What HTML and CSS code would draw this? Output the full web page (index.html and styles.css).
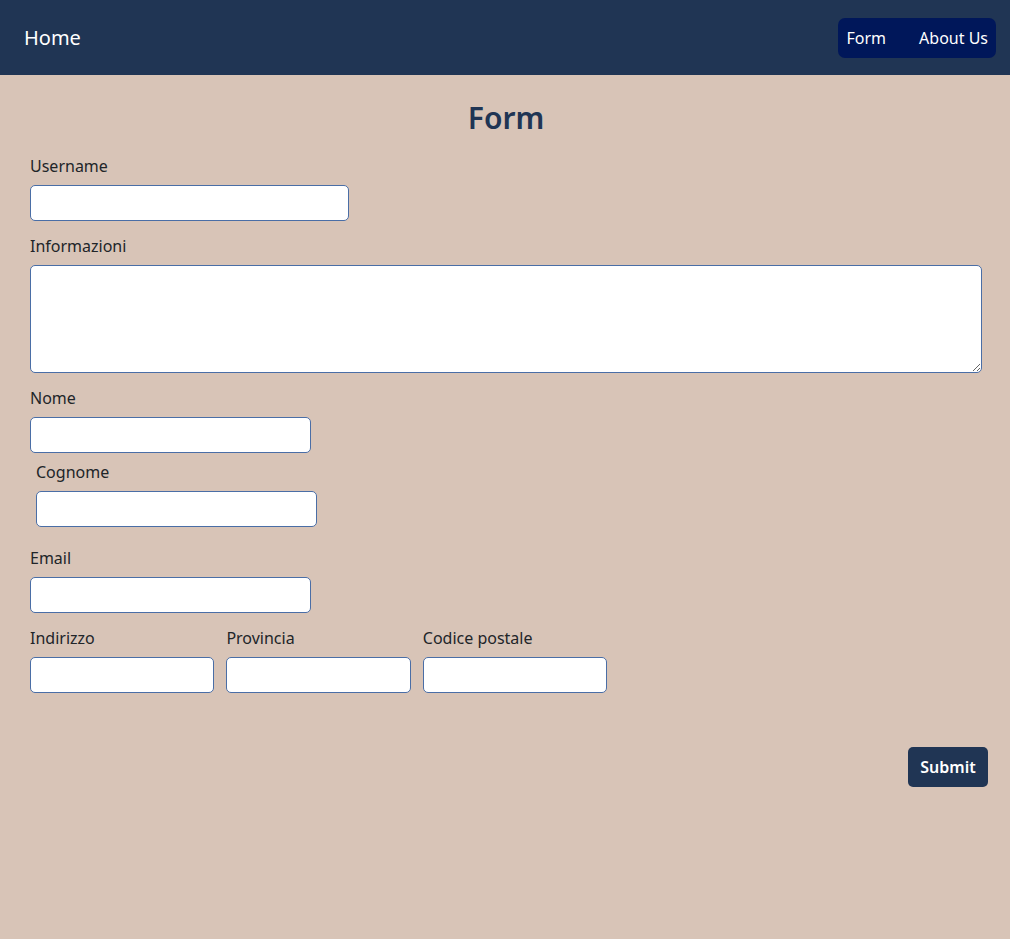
FILE: index.html
```html
<!DOCTYPE html>
<html lang="it">
<head>
<meta charset="utf-8">
<title>Form</title>
<link rel="stylesheet" href="styles.css">
</head>
<body>
<header class="topbar">
  <a class="brand" href="#">Home</a>
  <nav class="nav-pill">
    <a class="nav-link" href="#">Form</a>
    <a class="nav-link" href="#">About Us</a>
  </nav>
</header>
<main class="page">
  <h1 class="title">Form</h1>
  <form class="form">
    <div class="field">
      <label class="label" for="username">Username</label>
      <input class="input w-user" id="username" type="text">
    </div>
    <div class="field">
      <label class="label" for="info">Informazioni</label>
      <textarea class="input area" id="info"></textarea>
    </div>
    <div class="field">
      <label class="label" for="nome">Nome</label>
      <input class="input w-name" id="nome" type="text">
    </div>
    <div class="field field-tight indent">
      <label class="label" for="cognome">Cognome</label>
      <input class="input w-name" id="cognome" type="text">
    </div>
    <div class="field field-loose">
      <label class="label" for="email">Email</label>
      <input class="input w-name" id="email" type="email">
    </div>
    <div class="field row">
      <div class="col">
        <label class="label" for="indirizzo">Indirizzo</label>
        <input class="input" id="indirizzo" type="text">
      </div>
      <div class="col">
        <label class="label" for="provincia">Provincia</label>
        <input class="input" id="provincia" type="text">
      </div>
      <div class="col">
        <label class="label" for="cap">Codice postale</label>
        <input class="input" id="cap" type="text">
      </div>
    </div>
    <div class="actions">
      <button class="submit" type="submit">Submit</button>
    </div>
  </form>
</main>
</body>
</html>
```
FILE: styles.css
```css
* { box-sizing: border-box; }
html, body { margin: 0; padding: 0; }
body {
  background: #d8c4b7;
  font-family: "Noto Sans", "Open Sans", sans-serif;
  font-size: 16px;
  line-height: 24px;
  color: #212529;
  min-height: 939px;
}
.topbar {
  background: #203554;
  height: 75px;
  display: flex;
  align-items: center;
  justify-content: space-between;
  padding: 0 14px 0 24px;
}
.brand {
  color: #ffffff;
  text-decoration: none;
  font-size: 20px;
  line-height: 30px;
}
.nav-pill {
  background: #00175a;
  border-radius: 7px;
  height: 40px;
  display: flex;
  align-items: center;
  gap: 17px;
  padding-left: 1px;
}
.nav-link {
  color: #ffffff;
  text-decoration: none;
  padding: 0 8px;
  font-size: 16px;
}
.page { padding: 0 28px 0 30px; }
.title {
  margin: 0;
  padding-top: 24px;
  text-align: center;
  font-size: 30px;
  line-height: 38px;
  font-weight: 600;
  color: #203554;
}
.form { display: flex; flex-direction: column; padding-top: 17px; }
.field { display: flex; flex-direction: column; align-items: flex-start; margin-bottom: 13px; }
.field-tight { margin-top: -6px; }
.field-loose { margin-top: 6px; }
.indent { padding-left: 6px; }
.label { display: block; margin-bottom: 7px; }
.input {
  height: 36px;
  border: 1px solid #4a6ea6;
  border-radius: 5px;
  background: #ffffff;
  font: inherit;
  padding: 4px 10px;
}
.w-user { width: 319px; }
.w-name { width: 281px; }
.area { width: 952px; height: 108px; resize: vertical; }
.row { flex-direction: row; gap: 12px; }
.col { display: flex; flex-direction: column; }
.col .input { width: 184.4px; }
.actions { display: flex; justify-content: flex-end; padding-top: 41px; margin-right: -6px; }
.submit {
  background: #203554;
  color: #ffffff;
  border: none;
  border-radius: 5px;
  width: 80px;
  height: 40px;
  font: inherit;
  font-weight: 600;
  cursor: pointer;
}
```
